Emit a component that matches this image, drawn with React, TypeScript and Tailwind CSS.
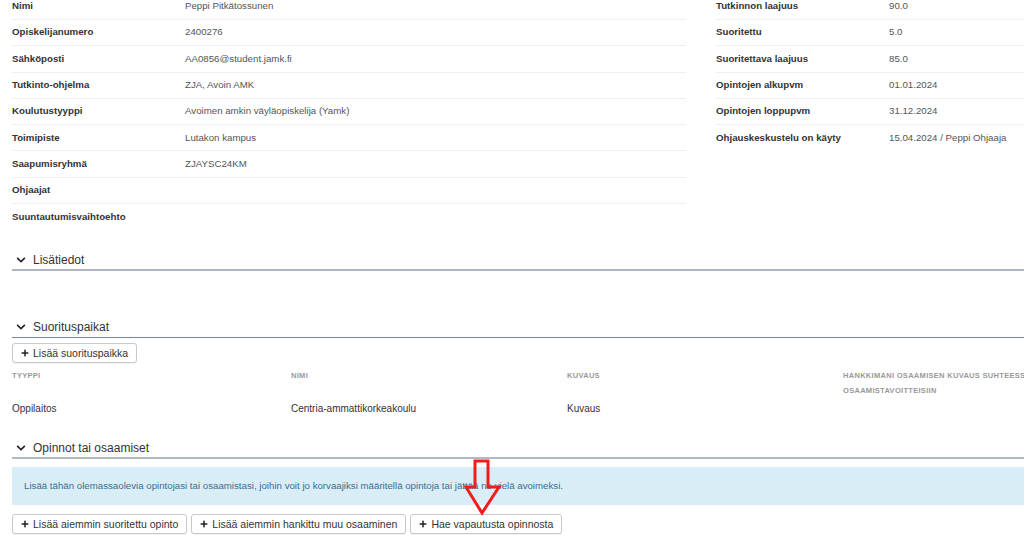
import React from "react";
import { FaChevronDown, FaPlus } from "react-icons/fa";

const leftRows: [string, string][] = [
  ["Nimi", "Peppi Pitkätossunen"],
  ["Opiskelijanumero", "2400276"],
  ["Sähköposti", "AA0856@student.jamk.fi"],
  ["Tutkinto-ohjelma", "ZJA, Avoin AMK"],
  ["Koulutustyyppi", "Avoimen amkin väyläopiskelija (Yamk)"],
  ["Toimipiste", "Lutakon kampus"],
  ["Saapumisryhmä", "ZJAYSC24KM"],
  ["Ohjaajat", ""],
  ["Suuntautumisvaihtoehto", ""],
];

const rightRows: [string, string][] = [
  ["Tutkinnon laajuus", "90.0"],
  ["Suoritettu", "5.0"],
  ["Suoritettava laajuus", "85.0"],
  ["Opintojen alkupvm", "01.01.2024"],
  ["Opintojen loppupvm", "31.12.2024"],
  ["Ohjauskeskustelu on käyty", "15.04.2024 / Peppi Ohjaaja"],
];

function InfoRow({ label, value, last }: { label: string; value: string; last?: boolean }) {
  return (
    <div className={`flex h-[26.3px] items-center ${last ? "" : "border-b border-[#efeff3]"}`}>
      <div className="w-[173px] shrink-0 font-bold text-[#333]">{label}</div>
      <div className="text-[#555]">{value}</div>
    </div>
  );
}

function SectionHeader({ title, line }: { title: string; line: string }) {
  return (
    <div className={`flex h-[21px] items-center gap-[7px] pl-[4px] ${line}`}>
      <FaChevronDown className="h-[10px] w-[10px] text-[#222]" />
      <span className="text-[12px] text-[#333]">{title}</span>
    </div>
  );
}

function Button({ children }: { children: React.ReactNode }) {
  return (
    <button className="flex h-[20px] items-center gap-[4px] rounded-[3px] border border-[#c8c8c8] bg-white px-[8px] text-[10.5px] text-[#333] shadow-[0_1px_1px_rgba(0,0,0,0.06)]">
      <FaPlus className="h-[8px] w-[8px] text-[#222]" />
      {children}
    </button>
  );
}

export default function App() {
  return (
    <div className="relative h-[535px] w-[1024px] overflow-hidden bg-white font-['Liberation_Sans',Arial,sans-serif] text-[9.7px]">
      {/* Student info */}
      <div className="-mt-[6.3px] flex pl-[12px]">
        <div className="w-[674px] shrink-0">
          {leftRows.map(([l, v], i) => (
            <InfoRow key={l} label={l} value={v} last={i === leftRows.length - 1} />
          ))}
        </div>
        <div className="ml-[30px] w-[320px] shrink-0">
          {rightRows.map(([l, v], i) => (
            <InfoRow key={l} label={l} value={v} last={i === rightRows.length - 1} />
          ))}
        </div>
      </div>

      <div className="mt-[20px] pl-[12px]">
        {/* Lisätiedot */}
        <SectionHeader title="Lisätiedot" line="border-b-2 border-[#aeb5c8]" />
        <div className="h-[46px]" />

        {/* Suorituspaikat */}
        <SectionHeader title="Suorituspaikat" line="border-b border-[#7c82a8]" />
        <div className="mt-[5px]">
          <Button>Lisää suorituspaikka</Button>
        </div>
        <div className="mt-[5px] grid w-[1107px] grid-cols-[279px_276px_276px_276px] text-[7.5px] font-bold uppercase tracking-[0.3px] text-[#999]">
          <div className="leading-[15px]">Tyyppi</div>
          <div className="leading-[15px]">Nimi</div>
          <div className="leading-[15px]">Kuvaus</div>
          <div className="leading-[15px]">Hankkimani osaamisen kuvaus suhteessa osaamistavoitteisiin</div>
        </div>
        <div className="grid h-[20px] w-[1107px] grid-cols-[279px_276px_276px_276px] items-center text-[10px] text-[#333]">
          <div>Oppilaitos</div>
          <div>Centria-ammattikorkeakoulu</div>
          <div>Kuvaus</div>
          <div />
        </div>

        {/* Opinnot tai osaamiset */}
        <div className="mt-[20px]">
          <SectionHeader title="Opinnot tai osaamiset" line="border-b-2 border-[#b4b7c6]" />
        </div>
        <div className="mt-[8px] flex h-[38px] items-center bg-[#d9edf7] pl-[12px] text-[9.7px] text-[#3a6f8f]">
          Lisää tähän olemassaolevia opintojasi tai osaamistasi, joihin voit jo korvaajiksi määritellä opintoja tai jättää ne vielä avoimeksi.
        </div>
        <div className="mt-[9px] flex gap-[4px]">
          <Button>Lisää aiemmin suoritettu opinto</Button>
          <Button>Lisää aiemmin hankittu muu osaaminen</Button>
          <Button>Hae vapautusta opinnosta</Button>
        </div>
      </div>

      {/* Red annotation arrow */}
      <svg className="absolute left-[463px] top-[459px]" width="40" height="58" viewBox="0 0 40 58">
        <path
          d="M12 2 L25 2 L25 28 L36 28 L19 54 L3 28 L12 28 Z"
          fill="none"
          stroke="#f21c1c"
          strokeWidth="3"
          strokeLinejoin="miter"
        />
      </svg>
    </div>
  );
}
